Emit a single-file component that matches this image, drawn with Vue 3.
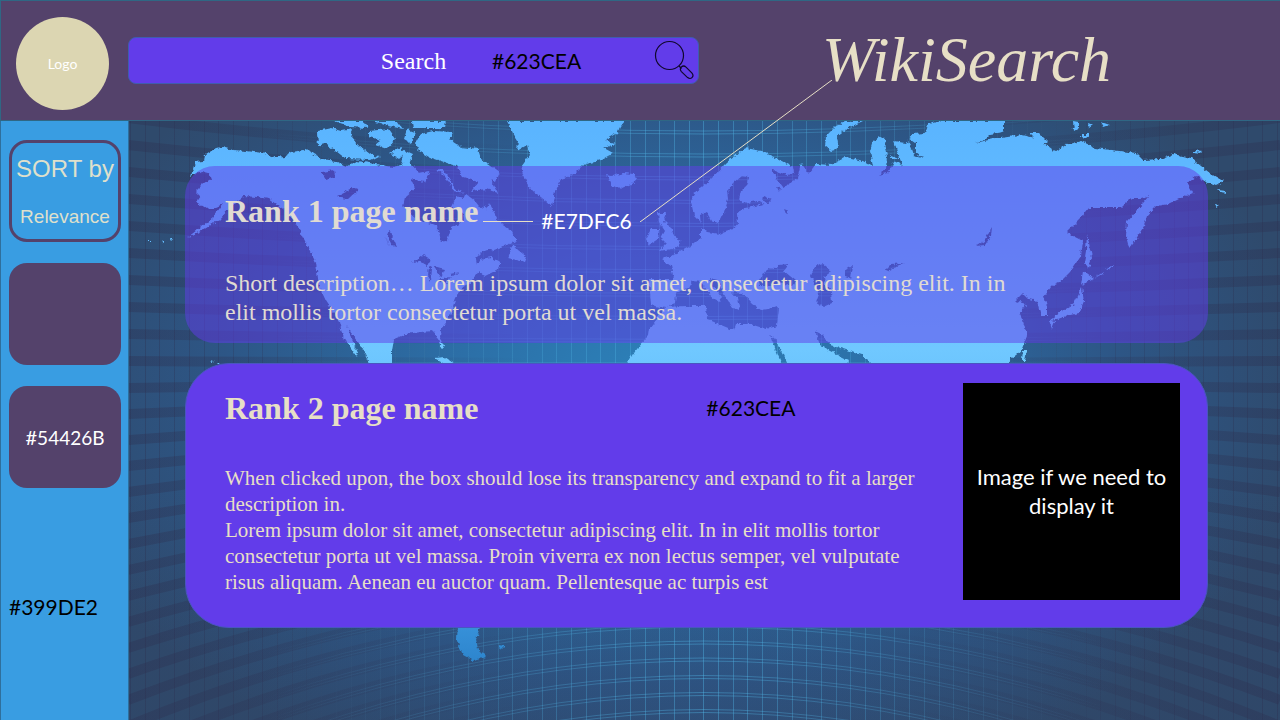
<script setup>
import { ref } from 'vue'

const query = ref('')

const arcs = []
for (let i = 0; i < 14; i++) {
  const edge = 10 + i * 27
  arcs.push(`M128 ${edge} Q704 ${Math.round(edge + 0.28 * (375 - edge))} 1280 ${edge}`)
}
for (let i = 0; i < 24; i++) {
  const edge = 388 + i * 26
  arcs.push(`M128 ${edge} Q704 ${Math.round(edge - 0.68 * (edge - 375))} 1280 ${edge}`)
}
const columns = Array.from({ length: 79 }, (_, i) => 130 + Math.round(i * 14.7))

const land = [
  'M194 161L203 160L204 154L215 147L222 146L232 149L245 150L262 152L276 157L283 156L290 152L302 150L306 147L312 153L322 158L335 160L345 165L356 160L375 163L392 166L400 164L404 157L410 163L418 172L440 168L448 176L453 187L465 193L474 200L484 213L488 202L497 220L510 229L515 240L500 246L484 252L478 258L490 256L500 262L498 268L484 275L478 270L470 282L462 286L455 297L452 305L448 318L440 328L439 336L443 348L440 347L436 336L432 330L420 331L405 333L393 338L391 350L391 372L374 372L368 361L360 345L345 325L357 352L356 356L342 335L338 320L325 300L318 285L315 262L310 252L303 238L295 222L285 210L268 198L255 196L243 195L236 200L228 208L218 219L202 229L187 236L200 226L212 216L222 203L215 206L205 208L195 202L200 195L195 190L203 182L210 178L208 172L200 170L190 175Z',
  'M316 130L330 127L340 130L352 128L350 136L358 145L368 153L378 155L370 159L345 158L335 150L325 143L317 145Z',
  'M333 120L362 120L366 127L350 126L342 123Z',
  'M368 130L388 128L395 138L386 148L374 144L380 139L368 136Z',
  'M372 120L396 120L402 128L388 125Z',
  'M411 120L445 120L444 127L412 127Z',
  'M388 152L398 146L405 152L398 158Z',
  'M403 150L412 154L408 163L401 158Z',
  'M415 142L420 133L432 130L452 131L449 139L460 146L477 148L480 158L492 166L499 171L495 180L490 178L497 192L485 188L470 190L478 181L462 176L455 165L440 160L428 156L418 150Z',
  'M406 128L414 131L410 142L403 138Z',
  'M484 205L492 220L503 232L510 230L515 240L500 246L478 252L470 240L475 210Z',
  'M512 243L517 249L526 256L524 261L507 257Z',
  'M506 120L512 132L517 140L516 150L526 144L529 154L520 166L524 180L532 190L545 200L551 205L554 190L560 178L572 174L582 164L600 159L612 152L603 147L614 143L604 139L616 132L619 126L624 120Z',
  'M606 173L612 175L622 172L633 173L636 178L630 183L621 187L611 185Z',
  'M657 212L666 212L663 220L670 227L674 237L680 240L676 247L658 250L665 242L660 237L664 230L658 221Z',
  'M650 228L658 228L657 238L648 244L645 238Z',
  'M690 200L695 190L710 178L725 162L738 152L745 147L760 150L775 157L792 166L793 172L787 175L772 170L785 184L796 178L800 162L808 172L815 163L830 164L845 156L855 158L862 160L872 166L869 150L872 140L878 135L886 140L890 155L898 158L893 140L905 142L912 133L925 132L927 123L940 120L1003 120L1003 130L990 137L1000 137L1020 134L1035 137L1050 148L1055 150L1065 144L1080 140L1095 147L1110 149L1135 152L1142 159L1160 158L1172 153L1190 157L1200 165L1210 173L1222 180L1215 185L1205 181L1195 175L1186 182L1192 192L1180 197L1168 203L1155 205L1146 215L1143 225L1135 238L1128 247L1125 235L1126 220L1135 210L1148 195L1140 197L1130 197L1120 207L1105 207L1088 207L1080 217L1066 231L1072 235L1082 240L1080 255L1070 270L1060 280L1050 285L1043 295L1046 305L1046 315L1040 315L1036 300L1028 298L1022 292L1014 300L1025 303L1018 312L1022 320L1026 335L1020 350L1010 358L1000 372L620 372L627 361L635 348L647 335L648 328L656 318L664 307L650 304L648 278L673 278L670 265L660 258L675 253L690 245L700 237L700 222L693 215Z',
  'M824 145L825 135L835 125L845 120L862 120L845 128L836 135L838 148L830 150Z',
  'M1072 120L1078 121L1078 127L1073 130Z',
  'M1080 133L1088 133L1089 137L1079 136Z M1100 121L1109 124L1103 126Z M1087 122L1092 124L1088 127Z',
  'M1028 132L1038 132L1048 142L1040 144Z',
  'M1192 149L1202 150L1200 152L1192 151Z M1217 189L1225 190L1226 192L1219 191Z M1214 203L1218 204L1215 206Z',
  'M1081 287L1083 300L1078 312L1065 315L1057 318L1048 320L1060 311L1073 303Z M1048 319L1054 320L1051 328Z',
  'M1082 270L1093 278L1080 284Z M1086 233L1089 248L1091 256L1087 268L1083 262L1085 250Z',
  'M1095 276L1102 271L1101 273L1094 277Z M1104 269L1113 264L1112 266L1104 270Z',
  'M1022 350L1026 350L1024 360L1021 360Z',
  'M433 357L444 356L454 363L445 363Z',
  'M148 239L151 239L151 242L148 241Z M160 240L163 240L163 242Z M169 238L172 238L170 240Z M210 359L213 360L211 361Z M216 361L219 361L218 363Z',
  'M456 626L479 626L475 638L477 648L485 656L473 660L462 654L458 645L455 637Z M497 644L504 645L500 649Z'
]

const water = [
  'M430 166L440 172L448 180L452 190L465 192L462 198L455 196L450 206L462 212L463 220L450 227L446 240L439 241L436 225L415 217L402 205L404 196L414 187L410 178L424 181Z',
  'M320 171L333 169L334 176L325 179Z M336 195L352 187L358 188L347 198L340 197Z M386 233L391 245L396 246L389 231Z M384 234L389 247L386 240Z',
  'M411 262L422 254L430 259L427 264L419 261Z M428 265L431 267L430 280L427 275Z M432 265L444 268L440 276Z M437 279L450 276L444 282Z M449 273L458 271L452 275Z M474 258L482 250L492 248L485 256L475 263Z',
  'M741 175L748 176L747 183L740 190L738 198L742 203L756 200L763 203L745 207L736 212L737 222L731 229L718 233L706 231L700 226L699 214L705 211L710 220L717 223L723 211L727 198L726 190L733 182Z',
  'M763 195L770 198L767 203L762 200Z M775 186L779 187L778 191Z M783 208L788 210L785 213Z',
  'M770 168L786 174L793 173L791 181L782 186L776 178Z',
  'M758 280L766 267L774 268L777 264L788 263L783 270L795 280L791 285L778 281L766 285L759 285Z',
  'M810 275L813 266L821 262L831 270L823 276L824 284L830 291L831 302L822 306L815 302L818 293Z M844 269L852 264L850 278L844 276Z',
  'M665 306L674 302L675 292L687 287L691 280L700 281L710 295L718 301L721 297L710 283L709 278L717 280L724 295L732 307L739 309L736 297L730 291L741 292L751 303L760 309L778 306L776 325L765 328L749 323L734 323L732 329L720 324L706 318L705 305L685 305Z',
  'M769 334L774 338L782 353L787 364L781 364L774 347Z M814 330L822 334L829 344L839 347L861 354L879 372L845 372L847 359L829 350L819 344Z',
  'M885 268L890 263L904 262L893 266L886 270Z M975 245L983 240L988 231L991 226L990 235L984 244Z',
  'M886 137L890 148L889 158L899 158L902 165L893 160L887 172L877 174L885 168L886 155L883 143Z M904 135L914 142L914 151L922 157L913 155L909 143Z',
  'M974 142L985 138L990 133L1003 131L992 138Z'
]
</script>

<template>
  <div class="page">
    <header class="topbar">
      <div class="logo">Logo</div>
      <form class="search" role="search" @submit.prevent>
        <input v-model="query" class="search-input" type="text" placeholder="Search" aria-label="Search" />
        <span class="search-code">#623CEA</span>
        <button class="search-button" type="submit" aria-label="Search">
          <svg viewBox="0 0 40 40" width="40" height="40" fill="none" stroke="#10082c" stroke-width="1.2">
            <circle cx="15.500" cy="15.500" r="14" />
            <path d="M25 26l2.500 2.500" />
            <path d="M27.200 27.200q2.400-2.400 4.800 0l6 6q2 2.600 0 4.400q-2 1.800-4.400 0l-6.200-6q-2-2.200-.2-4.400z" />
          </svg>
        </button>
      </form>
      <h1 class="brand">WikiSearch</h1>
    </header>

    <div class="body">
      <aside class="sidebar">
        <button class="tile sort" type="button">
          <span class="sort-title">SORT by</span>
          <span class="sort-value">Relevance</span>
        </button>
        <div class="tile"></div>
        <div class="tile"><span class="hash">#</span>54426B</div>
        <p class="sidebar-code">#399DE2</p>
      </aside>

      <main class="results">
        <svg class="world" viewBox="129 121 1151 599" preserveAspectRatio="xMidYMin slice" aria-hidden="true">
          <defs>
            <radialGradient id="sea" gradientUnits="userSpaceOnUse" cx="0" cy="0" r="1" gradientTransform="translate(670 390) scale(640 420)">
              <stop offset="0" stop-color="#2c84bc" />
              <stop offset=".35" stop-color="#2c6ea6" />
              <stop offset=".7" stop-color="#2d5686" />
              <stop offset="1" stop-color="#2f4a6c" />
            </radialGradient>
            <linearGradient id="dusk" x1="0" y1="0" x2="0" y2="1">
              <stop offset=".6" stop-color="#303856" stop-opacity="0" />
              <stop offset="1" stop-color="#303856" stop-opacity=".15" />
            </linearGradient>
            <linearGradient id="ground" gradientUnits="userSpaceOnUse" x1="0" y1="121" x2="0" y2="665">
              <stop offset="0" stop-color="#5ab4ff" />
              <stop offset=".42" stop-color="#70c8ff" />
              <stop offset=".8" stop-color="#4aa8f0" />
              <stop offset="1" stop-color="#2c84cc" />
            </linearGradient>
            <linearGradient id="glow" gradientUnits="userSpaceOnUse" x1="128" y1="0" x2="1280" y2="0">
              <stop offset=".12" stop-color="#4fb4e4" stop-opacity="0" />
              <stop offset=".5" stop-color="#4fb4e4" stop-opacity=".42" />
              <stop offset=".85" stop-color="#4fb4e4" stop-opacity="0" />
            </linearGradient>
            <linearGradient id="shade" gradientUnits="userSpaceOnUse" x1="128" y1="0" x2="1280" y2="0">
              <stop offset="0" stop-color="#2c2f50" stop-opacity=".36" />
              <stop offset=".35" stop-color="#2c2f50" stop-opacity="0" />
              <stop offset=".65" stop-color="#2c2f50" stop-opacity="0" />
              <stop offset="1" stop-color="#2c2f50" stop-opacity=".36" />
            </linearGradient>
            <filter id="coast" filterUnits="userSpaceOnUse" x="128" y="115" width="1152" height="605" color-interpolation-filters="sRGB">
              <feTurbulence type="fractalNoise" baseFrequency=".22" numOctaves="3" seed="4" />
              <feDisplacementMap in="SourceGraphic" scale="5" xChannelSelector="R" yChannelSelector="G" />
              <feOffset dx="1" dy="1" />
            </filter>
            <mask id="continents" maskUnits="userSpaceOnUse" x="128" y="115" width="1152" height="605">
              <g filter="url(#coast)">
                <path v-for="(d, i) in land" :key="'l' + i" :d="d" fill="#fff" />
                <path v-for="(d, i) in water" :key="'w' + i" :d="d" fill="#000" />
              </g>
            </mask>
          </defs>
          <rect x="128" y="121" width="1152" height="599" fill="url(#sea)" />
          <rect x="128" y="121" width="1152" height="599" fill="url(#dusk)" />
          <g fill="none">
            <path v-for="(d, i) in arcs" :key="'s' + i" :d="d" stroke="url(#shade)" stroke-width="10" />
            <path v-for="(d, i) in arcs" :key="'g' + i" :d="d" stroke="url(#glow)" stroke-width="1" />
            <path v-for="(d, i) in arcs" :key="'h' + i" :d="d" stroke="url(#glow)" stroke-width="1" transform="translate(0 3)" />
          </g>
          <rect v-for="x in columns" :key="'c' + x" :x="x" y="121" width="1" height="599" fill="url(#glow)" />
          <rect v-for="x in columns" :key="'d' + x" :x="x" y="121" width="1" height="599" fill="url(#shade)" />
          <rect x="128" y="115" width="1152" height="605" fill="url(#ground)" mask="url(#continents)" />
        </svg>

        <article class="card card-one">
          <div class="card-heading">
            <h2>Rank 1 page name</h2>
            <span class="leader"></span>
            <span class="code-light">#E7DFC6</span>
          </div>
          <p>Short description… Lorem ipsum dolor sit amet, consectetur adipiscing elit. In in<br />elit mollis tortor consectetur porta ut vel massa.</p>
        </article>

        <article class="card card-two">
          <div class="card-text">
            <div class="card-heading">
              <h2>Rank 2 page name</h2>
              <span class="code-dark">#623CEA</span>
            </div>
            <p>When clicked upon, the box should lose its transparency and expand to fit a larger<br />description in.<br />Lorem ipsum dolor sit amet, consectetur adipiscing elit. In in elit mollis tortor<br />consectetur porta ut vel massa. Proin viverra ex non lectus semper, vel vulputate<br />risus aliquam. Aenean eu auctor quam. Pellentesque ac turpis est</p>
          </div>
          <div class="picture">Image if we need to display it</div>
        </article>
      </main>
    </div>

    <svg class="connector" viewBox="0 0 192 142" width="192" height="142" aria-hidden="true">
      <path d="M0 142L192 0" stroke="#e7dfc6" stroke-width="1" fill="none" />
    </svg>
  </div>
</template>

<style>
body {
  overflow-x: hidden;
}
</style>

<style scoped>
* {
  box-sizing: border-box;
}
.page {
  position: relative;
  display: flex;
  flex-direction: column;
  min-height: 100vh;
  font-family: Lato, "Liberation Sans", sans-serif;
  color: #e7dfc6;
}
h1,
h2,
p {
  margin: 0;
}
.topbar {
  display: flex;
  align-items: center;
  padding: 16px 24px 10px 16px;
  border: 1px solid #2f6784;
  border-right: 0;
  background: #54426b;
}
.logo {
  display: flex;
  flex: none;
  align-items: center;
  justify-content: center;
  width: 93px;
  height: 93px;
  margin-left: -1px;
  margin-right: 19px;
  border-radius: 50%;
  background: #dcd6b2;
  color: #fff;
  font-size: 14px;
}
.search {
  position: relative;
  flex: 0 1 571px;
  margin-bottom: 6px;
}
.search-input {
  display: block;
  width: 100%;
  height: 47px;
  padding: 2px 48px 0;
  border: 1px solid #3f5cb0;
  border-radius: 8px;
  background: #623cea;
  color: #fff;
  font: 24px "Liberation Serif", serif;
  text-align: center;
}
.search-input::placeholder {
  color: #fff;
  opacity: 1;
}
.search-code {
  position: absolute;
  left: 364px;
  top: 10px;
  font-size: 21px;
  line-height: 28px;
  color: #000;
}
.search-button {
  position: absolute;
  right: 5px;
  top: 3px;
  padding: 0;
  border: 0;
  background: none;
}
.search-button svg {
  display: block;
}
.brand {
  margin-left: 123px;
  margin-bottom: 8px;
  font: italic 64px/72px "Liberation Serif", serif;
}
.body {
  display: flex;
  flex: 1;
}
.sidebar {
  display: flex;
  flex: none;
  flex-direction: column;
  gap: 21px;
  width: 129px;
  padding: 19px 7px 0 8px;
  border-left: 1px solid #2f6f9c;
  border-right: 1px solid #2f6f9c;
  background: #399de2;
}
.tile {
  display: flex;
  align-items: center;
  justify-content: center;
  height: 102px;
  border-radius: 18px;
  background: #54426b;
  color: #fff;
  font-size: 19px;
}
.hash {
  font-size: 20px;
}
.sort {
  flex-direction: column;
  gap: 20px;
  padding: 4px 0 0;
  border: 3px solid #54426b;
  background: none;
  color: #dfe0cc;
  font-family: "Liberation Sans", sans-serif;
  white-space: nowrap;
}
.sort-title {
  font-size: 24px;
  line-height: 28px;
}
.sort-value {
  font-size: 19px;
  line-height: 28px;
}
.sidebar-code {
  margin-top: 84px;
  font-size: 21px;
  line-height: 28px;
  color: #000;
}
.results {
  position: relative;
  display: flex;
  flex: 1;
  flex-direction: column;
  gap: 20px;
  padding: 45px 72px 0 56px;
  overflow: hidden;
}
.world {
  position: absolute;
  inset: 0;
  width: 100%;
  height: 100%;
}
.card {
  position: relative;
  font-family: "Liberation Serif", serif;
}
.card h2 {
  font-size: 32px;
  line-height: 36px;
}
.card-heading {
  display: flex;
  align-items: center;
  height: 36px;
}
.card-one {
  padding: 27px 40px 15px;
  border-radius: 30px;
  background: rgba(98, 60, 234, 0.5);
  color: #e0dbd2;
}
.card-one p {
  margin-top: 40px;
  margin-bottom: 1px;
  font-size: 24px;
  line-height: 29px;
}
.leader {
  width: 50px;
  height: 1px;
  margin: 20px 8px 0 5px;
  background: #e7dfc6;
}
.code-light,
.code-dark {
  font: 21px/28px Lato, "Liberation Sans", sans-serif;
}
.code-light {
  margin-top: 20px;
  color: #fff;
}
.code-dark {
  margin-left: 228px;
  color: #000;
}
.card-two {
  display: flex;
  justify-content: space-between;
  padding: 19px 27px 27px 39px;
  border: 1px solid #4a55c0;
  border-radius: 44px;
  background: #623cea;
}
.card-text {
  padding-top: 7px;
}
.card-text p {
  margin-top: 39px;
  font-size: 21px;
  line-height: 26px;
}
.picture {
  display: flex;
  flex: none;
  align-items: center;
  justify-content: center;
  width: 217px;
  height: 217px;
  padding-bottom: 2px;
  background: #000;
  color: #fff;
  font: 22px/29px Lato, "Liberation Sans", sans-serif;
  text-align: center;
}
.connector {
  position: absolute;
  left: 640px;
  top: 80px;
  pointer-events: none;
}
</style>
